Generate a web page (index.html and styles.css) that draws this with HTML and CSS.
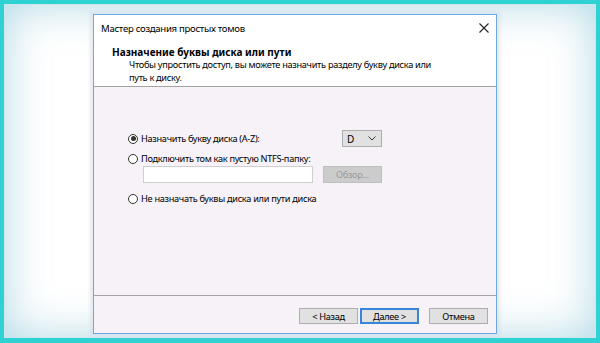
FILE: index.html
```html
<!DOCTYPE html>
<html lang="ru">
<head>
    <meta charset="UTF-8">
    <title>Мастер создания простых томов</title>
    <link rel="stylesheet" href="styles.css">
</head>
<body>
    <div class="frame">
        <div class="dialog">
            <div class="titlebar">
                <span class="title">Мастер создания простых томов</span>
                <svg class="close" width="10" height="10" viewBox="0 0 10 10">
                    <path d="M0.5 0.5 L9.5 9.5 M9.5 0.5 L0.5 9.5" stroke="#222" stroke-width="1.1" fill="none"/>
                </svg>
            </div>
            <div class="header">
                <div class="heading">Назначение буквы диска или пути</div>
                <div class="subtitle">Чтобы упростить доступ, вы можете назначить разделу букву диска или<br>путь к диску.</div>
            </div>
            <div class="content">
                <div class="options">
                    <div class="row first-row">
                        <label class="radio checked"><span class="circle"></span>Назначить букву диска (A-Z):</label>
                        <div class="select">
                            <span>D</span>
                            <svg width="8" height="5" viewBox="0 0 8 5">
                                <path d="M0.5 0.5 L4 4 L7.5 0.5" stroke="#333" stroke-width="1" fill="none"/>
                            </svg>
                        </div>
                    </div>
                    <label class="radio second"><span class="circle"></span>Подключить том как пустую NTFS-папку:</label>
                    <div class="row path-row">
                        <div class="input"></div>
                        <div class="btn disabled">Обзор...</div>
                    </div>
                    <label class="radio third"><span class="circle"></span>Не назначать буквы диска или пути диска</label>
                </div>
            </div>
            <div class="footer">
                <div class="btn">&lt; Назад</div>
                <div class="btn default">Далее &gt;</div>
                <div class="btn cancel">Отмена</div>
            </div>
        </div>
    </div>
</body>
</html>
```

FILE: styles.css
```css
body {
    margin: 0;
    padding: 0;
    font-family: "Noto Sans", "Open Sans", sans-serif;
    font-size: 9.2px;
    letter-spacing: -0.3px;
    color: #000;
}
.frame {
    box-sizing: border-box;
    width: 600px;
    height: 343px;
    border: 4px solid #2fd1d3;
    border-bottom-width: 5px;
    background: #fff;
    box-shadow: inset 0 0 0 1px #cde7ec, inset 0 0 45px rgba(40, 150, 185, 0.38);
    padding: 10px 0 0 89px;
}
.dialog {
    box-sizing: border-box;
    width: 404px;
    height: 320px;
    border: 1px solid #6ea8e2;
    background: #fff;
    box-shadow: 0 0 3px 3px rgba(214, 222, 232, 0.6);
    display: flex;
    flex-direction: column;
}
.titlebar {
    height: 26px;
    display: flex;
    align-items: center;
    justify-content: space-between;
    padding: 0 7px;
}
.title {
    font-size: 9.6px;
}
.header {
    height: 46px;
    border-bottom: 1px solid #a4a4a4;
    box-shadow: 0 1px 0 #dadada;
    padding: 5px 0 0 18px;
    box-sizing: border-box;
}
.heading {
    font-weight: bold;
    font-size: 10px;
    letter-spacing: 0;
    line-height: 13px;
}
.subtitle {
    padding-left: 17px;
    line-height: 12.5px;
}
.content {
    flex: 1;
    background: #f6f2f8;
    padding: 43px 0 0 34px;
}
.options {
    width: 254px;
}
.row {
    display: flex;
    align-items: center;
    justify-content: space-between;
}
.first-row {
    height: 17px;
}
.radio {
    display: flex;
    align-items: center;
    height: 14px;
    line-height: 14px;
    white-space: nowrap;
}
.circle {
    box-sizing: border-box;
    width: 10px;
    height: 10px;
    border: 1px solid #333;
    border-radius: 50%;
    background: #fff;
    margin-right: 3px;
    display: flex;
    align-items: center;
    justify-content: center;
}
.checked .circle::after {
    content: '';
    width: 5px;
    height: 5px;
    border-radius: 50%;
    background: #333;
}
.second {
    margin-top: 5px;
}
.third {
    margin-top: 9px;
}
.select {
    box-sizing: border-box;
    width: 40px;
    height: 17px;
    background: #e1e1e1;
    border: 1px solid #adadad;
    display: flex;
    align-items: center;
    justify-content: space-between;
    padding: 0 5px 0 4px;
    font-size: 10px;
}
.path-row {
    padding-left: 15px;
}
.input {
    box-sizing: border-box;
    width: 170px;
    height: 17px;
    background: #fff;
    border: 1px solid #cfcfcf;
}
.btn {
    box-sizing: border-box;
    width: 59px;
    height: 16px;
    background: #e1e1e1;
    border: 1px solid #adadad;
    display: flex;
    align-items: center;
    justify-content: center;
}
.btn.disabled {
    height: 17px;
    background: #cccccc;
    border-color: #bfbfbf;
    color: #9a9a9a;
}
.btn.default {
    border: 2px solid #3a84d8;
    margin-left: 2px;
}
.btn.cancel {
    margin-left: 10px;
}
.footer {
    height: 38px;
    border-top: 1px solid #a4a4a4;
    background: #f6f2f8;
    box-sizing: border-box;
    display: flex;
    justify-content: flex-end;
    padding: 12px 8px 0 0;
}
```
